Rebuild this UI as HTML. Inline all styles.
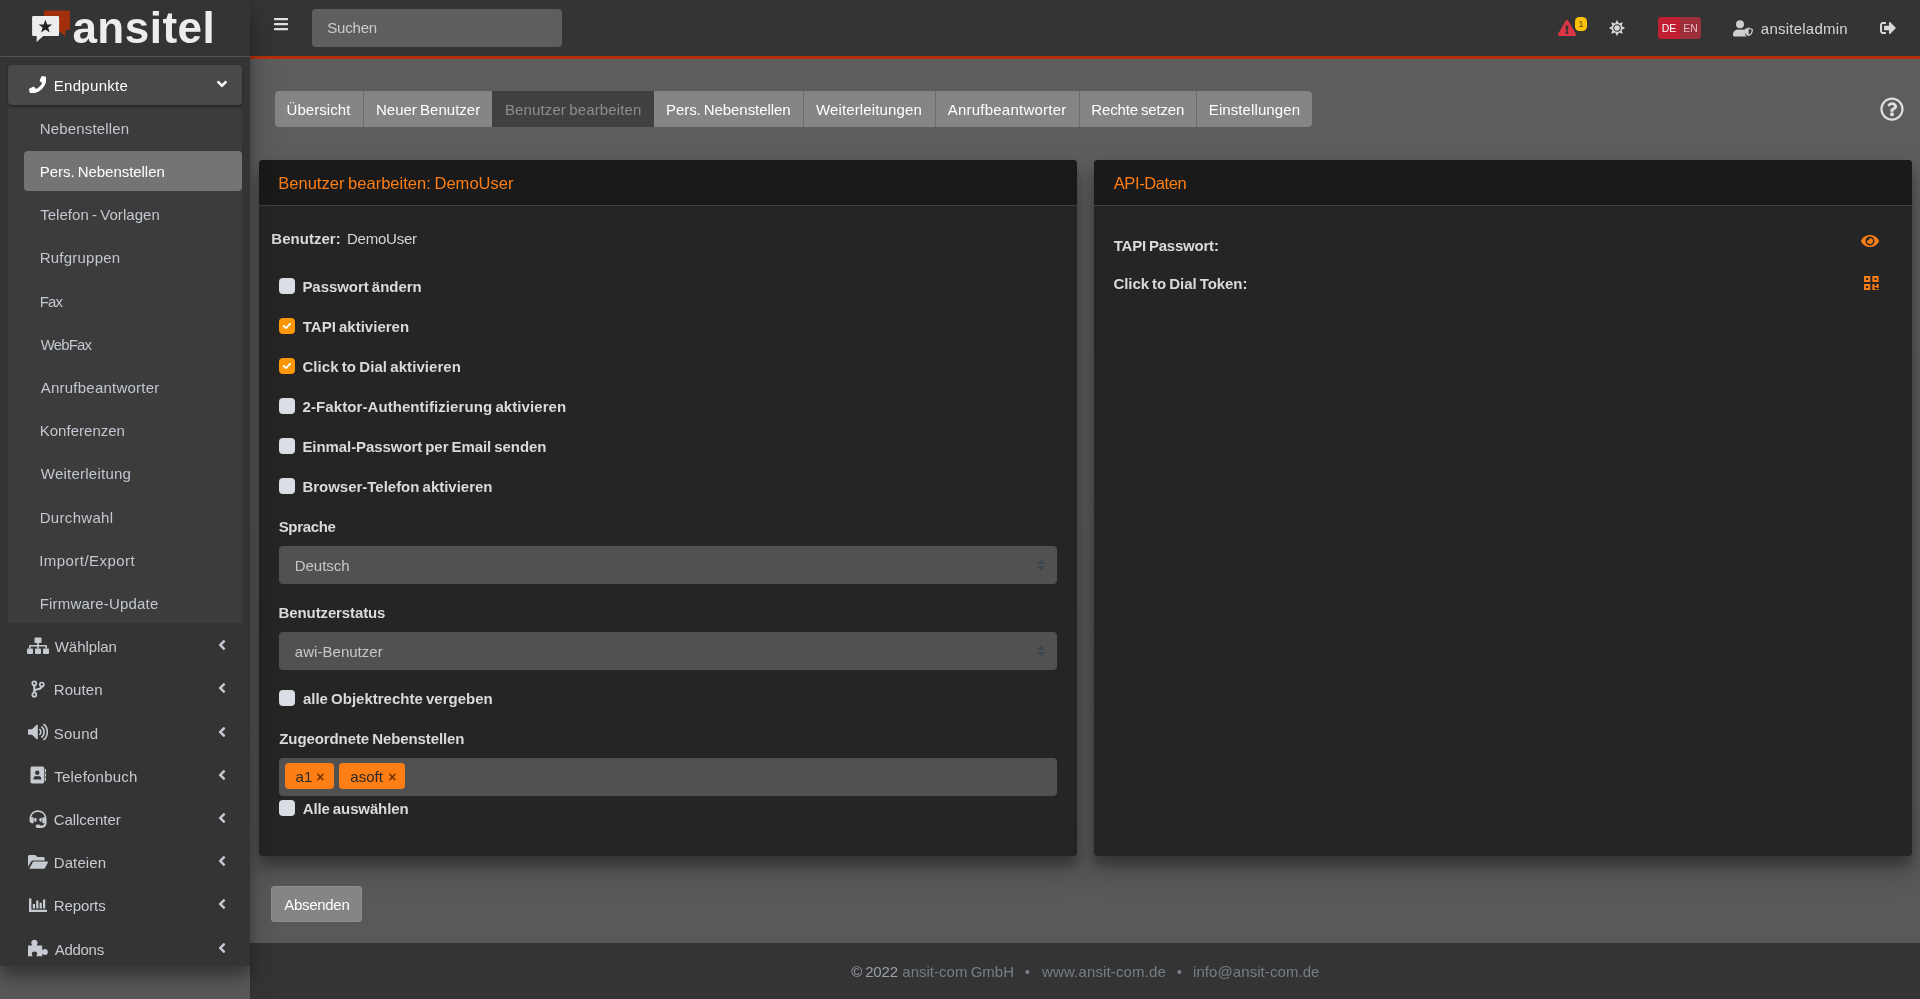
<!DOCTYPE html>
<html lang="de">
<head>
<meta charset="utf-8">
<title>ansitel - Benutzer bearbeiten</title>
<style>
*{box-sizing:border-box;margin:0;padding:0}
html,body{width:1920px;height:999px;overflow:hidden}
body{background:#5a5a5a;color:#ddd;font-family:"Liberation Sans",sans-serif;font-size:15px;position:relative}
svg{display:block}
.abs{position:absolute}
.tx{position:absolute;top:0;white-space:nowrap;word-spacing:-1px}

/* ---------- sidebar ---------- */
#sidebar{position:absolute;left:0;top:0;width:250px;height:966px;background:#343434;box-shadow:0 14px 28px rgba(0,0,0,.25),0 10px 10px rgba(0,0,0,.22);z-index:5}
#brand{position:absolute;left:0;top:0;width:250px;height:57px;border-bottom:1px solid #4b545c}
#brand .logo{top:-1px;font-weight:bold;font-size:44px;line-height:57px;color:#ededed}
.nav-top{position:absolute;left:8px;width:234px;height:40px;border-radius:4px;color:#c6cad1;line-height:41px}
.nav-top .ic{position:absolute;left:18.600px;top:10.500px;width:22px;height:18px;display:flex;justify-content:center;align-items:center}
.nav-top .ar{position:absolute;right:16px;top:11.400px}
.nav-top.open{background:#494949;color:#fff;box-shadow:0 1px 3px rgba(0,0,0,.12),0 1px 2px rgba(0,0,0,.24)}
#tree{position:absolute;left:8px;top:108px;width:234px;height:515px;background:#3c3c3c}
.sub{position:absolute;left:24px;width:218px;height:40px;border-radius:4px;color:#c2c7d0;line-height:41px}
.sub.act{background:#747474;color:#fff}

/* ---------- navbar ---------- */
#navbar{position:absolute;left:250px;top:0;width:1670px;height:59px;background:#343434;border-bottom:3px solid #b5300a;z-index:3}
#search{position:absolute;left:62px;top:9px;width:250px;height:38px;border-radius:4px;background:#5e5e5e;color:#ccc;line-height:38px}

/* ---------- content ---------- */
#content{position:absolute;left:250px;top:59px;width:1670px;height:884px;background:linear-gradient(#5d5d5d 0,#5d5d5d 12%,#595959 92%,#595959 100%)}
#tabs{position:absolute;left:25px;top:32px;width:1037px;height:36px;border-radius:4px;overflow:hidden}
.tab{position:absolute;top:0;height:36px;line-height:38px;background:#858585;color:#fff;border-left:1px solid #6e6e6e}
.tab:first-child{border-left:none}
.tab.dis{background:#404040;color:#8d8d8d;border-left:none}
.tab.dis + .tab{border-left:none}
.card{position:absolute;top:101px;width:818px;height:696px;background:#252525;border-radius:4px;box-shadow:0 0 1px rgba(0,0,0,.125),0 14px 28px rgba(0,0,0,.25),0 10px 10px rgba(0,0,0,.22)}
.card .hd{position:relative;height:46px;background:#1a1a1a;border-bottom:1px solid #3a4047;border-radius:4px 4px 0 0;color:#fd7e14;font-size:16.5px;line-height:46px}
.b{font-weight:bold;color:#dadada}
.row{position:absolute;left:20px;height:20px;line-height:22px;white-space:nowrap}
.cb{position:absolute;left:0;top:2px;width:16px;height:16px;border-radius:4px;background:#dadee4}
.cb.on{background:#fe9705}
.cb.on svg{position:absolute;left:3px;top:3px}
.sel{position:absolute;left:20px;width:778px;height:38px;border-radius:4px;background:#515151;color:#c8c8c8;line-height:40px}
.sel svg{position:absolute;right:12px;top:14px}
.tag{position:absolute;top:5px;height:26px;border-radius:4px;background:#fd7e14;color:#2a2a2a;line-height:26px}
.tag .tx{top:1px}
.tag .x{color:#7a3300;font-weight:bold;font-size:14px}
#submit{position:absolute;left:21px;top:827px;width:91px;height:36px;border-radius:3px;background:#858585;border:1px solid #8e8e8e;color:#fff;line-height:36px}

/* ---------- footer ---------- */
#footer{position:absolute;left:250px;top:943px;width:1670px;height:56px;background:#343434;color:#757e88;line-height:57px;z-index:2}
#footer .c{color:#9aa2ac}
#sidebar,#navbar,#content,#footer{will-change:transform}

/* per-text fitting */
#a0{margin-left:0.32px;letter-spacing:-0.291px}
#b0{margin-left:-0.34px;letter-spacing:0.058px}
#b1{margin-left:-0.78px;letter-spacing:0.019px}
#b2{margin-left:-0.11px;letter-spacing:0.120px}
#b3{margin-left:-0.41px;letter-spacing:-0.067px}
#b4{margin-left:-0.43px;letter-spacing:0.150px}
#b5{margin-left:0.11px;letter-spacing:0.230px}
#b6{margin-left:-0.95px;letter-spacing:-0.157px}
#b7{margin-left:-0.79px;letter-spacing:0.092px}
#c0{margin-left:0.09px;letter-spacing:-0.044px}
#c1{margin-left:0.47px;letter-spacing:0.004px}
#c2{margin-left:0.10px;letter-spacing:0.064px}
#c3{margin-left:0.31px;letter-spacing:0.079px}
#c4{margin-left:0.09px;letter-spacing:-0.071px}
#c5{margin-left:0.09px;letter-spacing:-0.014px}
#c6{margin-left:0.60px;letter-spacing:0.001px}
#c7{margin-left:0.53px;letter-spacing:-0.123px}
#f0{margin-left:0.43px;letter-spacing:0.026px}
#f1{margin-left:-0.42px;letter-spacing:-0.215px}
#g0{margin-left:0.00px;letter-spacing:0.000px}
#g1{margin-left:0.00px;letter-spacing:0.000px}
#g2{margin-left:0.00px;letter-spacing:0.000px}
#g3{margin-left:0.00px;letter-spacing:0.000px}
#h0{margin-left:-0.38px;letter-spacing:0.023px}
#h1{margin-left:0.44px;letter-spacing:-0.401px}
#l0{margin-left:0.08px;letter-spacing:-0.336px}
#l1{margin-left:-0.03px;letter-spacing:-0.117px}
#l2{margin-left:0.63px;letter-spacing:-0.091px}
#lg{margin-left:-1.00px;letter-spacing:0.500px}
#n0{margin-left:0.19px;letter-spacing:0.298px}
#n1{margin-left:1.17px;letter-spacing:-0.057px}
#n2{margin-left:0.13px;letter-spacing:0.096px}
#n3{margin-left:0.17px;letter-spacing:0.256px}
#n4{margin-left:0.64px;letter-spacing:0.226px}
#n5{margin-left:0.19px;letter-spacing:-0.068px}
#n6{margin-left:0.13px;letter-spacing:0.114px}
#n7{margin-left:0.13px;letter-spacing:-0.099px}
#n8{margin-left:1.09px;letter-spacing:-0.280px}
#o0{margin-left:0.47px;letter-spacing:-0.189px}
#o1{margin-left:0.99px;letter-spacing:0.018px}
#o2{margin-left:0.25px;letter-spacing:0.000px}
#o3{margin-left:1.43px;letter-spacing:0.143px}
#o4{margin-left:0.25px;letter-spacing:0.000px}
#o5{margin-left:0.46px;letter-spacing:0.069px}
#q0{margin-left:-0.00px;letter-spacing:-0.191px}
#r0{margin-left:0.47px;letter-spacing:-0.217px}
#r1{margin-left:0.10px;letter-spacing:-0.054px}
#s0{margin-left:0.14px;letter-spacing:0.170px}
#s1{margin-left:0.19px;letter-spacing:-0.042px}
#s10{margin-left:-0.38px;letter-spacing:0.450px}
#s11{margin-left:0.14px;letter-spacing:0.194px}
#s2{margin-left:0.62px;letter-spacing:0.036px}
#s3{margin-left:0.14px;letter-spacing:0.221px}
#s4{margin-left:0.14px;letter-spacing:-0.892px}
#s5{margin-left:1.18px;letter-spacing:-0.851px}
#s6{margin-left:1.07px;letter-spacing:0.242px}
#s7{margin-left:0.14px;letter-spacing:0.018px}
#s8{margin-left:1.18px;letter-spacing:0.242px}
#s9{margin-left:0.14px;letter-spacing:0.310px}
#u0{margin-left:0.26px;letter-spacing:0.232px}
#v0{margin-left:0.16px;letter-spacing:-0.041px}
#v1{margin-left:0.27px;letter-spacing:0.028px}
</style>
</head>
<body>

<div id="content">
  <div id="tabs"><div class="tab " style="left:0px;width:88px"><span id="b0" class="tx" style="left:11.9px;">Übersicht</span></div><div class="tab " style="left:88px;width:129px"><span id="b1" class="tx" style="left:12.7px;">Neuer Benutzer</span></div><div class="tab dis" style="left:217px;width:162px"><span id="b2" class="tx" style="left:13.1px;">Benutzer bearbeiten</span></div><div class="tab " style="left:379px;width:148.5px"><span id="b3" class="tx" style="left:12.4px;">Pers. Nebenstellen</span></div><div class="tab " style="left:527.5px;width:132.0px"><span id="b4" class="tx" style="left:12.8px;">Weiterleitungen</span></div><div class="tab " style="left:659.5px;width:144.0px"><span id="b5" class="tx" style="left:12.1px;">Anrufbeantworter</span></div><div class="tab " style="left:803.5px;width:117.5px"><span id="b6" class="tx" style="left:12.8px;">Rechte setzen</span></div><div class="tab " style="left:921px;width:116px"><span id="b7" class="tx" style="left:12.6px;">Einstellungen</span></div></div>
  <svg class="abs" style="left:1630.400px;top:38px" width="24" height="24" viewBox="0 0 512 512"><path fill="#e0e0e0" d="M256 8C119.043 8 8 119.083 8 256c0 136.997 111.043 248 248 248s248-111.003 248-248C504 119.083 392.957 8 256 8zm0 448c-110.532 0-200-89.431-200-200 0-110.495 89.472-200 200-200 110.491 0 200 89.471 200 200 0 110.530-89.431 200-200 200zm107.244-255.200c0 67.052-72.421 68.084-72.421 92.863V300c0 6.627-5.373 12-12 12h-45.647c-6.627 0-12-5.373-12-12v-8.659c0-35.745 27.100-50.034 47.579-61.516 17.561-9.845 28.324-16.541 28.324-29.579 0-17.246-21.999-28.693-39.784-28.693-23.189 0-33.894 10.977-48.942 29.969-4.057 5.120-11.460 6.071-16.666 2.124l-27.824-21.098c-5.107-3.872-6.251-11.066-2.644-16.363C184.846 131.491 214.940 112 261.794 112c49.071 0 101.450 38.304 101.450 88.800zM298 368c0 23.159-18.841 42-42 42s-42-18.841-42-42 18.841-42 42-42 42 18.841 42 42z"/></svg>
  <div class="card" style="left:9px">
    <div class="hd"><span id="h0" class="tx" style="left:19.6px;">Benutzer bearbeiten: DemoUser</span></div>
    <div class="row" style="top:68px"><span id="f0" class="tx b" style="left:-8.1px;">Benutzer:</span><span id="f1" class="tx" style="left:68.3px;color:#d6d6d6">DemoUser</span></div>
    <div class="row" style="top:116px"><i class="cb"></i><span id="c0" class="tx b" style="left:23.3px;">Passwort ändern</span></div>
    <div class="row" style="top:156px"><i class="cb on"><svg width="10" height="10" viewBox="0 0 10 10"><path d="M1.700 5 L4 7.100 L8.100 2.800" fill="none" stroke="#fff" stroke-width="1.900" stroke-linecap="round" stroke-linejoin="round"/></svg></i><span id="c1" class="tx b" style="left:23.3px;">TAPI aktivieren</span></div>
    <div class="row" style="top:196px"><i class="cb on"><svg width="10" height="10" viewBox="0 0 10 10"><path d="M1.700 5 L4 7.100 L8.100 2.800" fill="none" stroke="#fff" stroke-width="1.900" stroke-linecap="round" stroke-linejoin="round"/></svg></i><span id="c2" class="tx b" style="left:23.3px;">Click to Dial aktivieren</span></div>
    <div class="row" style="top:236px"><i class="cb"></i><span id="c3" class="tx b" style="left:23.3px;">2-Faktor-Authentifizierung aktivieren</span></div>
    <div class="row" style="top:276px"><i class="cb"></i><span id="c4" class="tx b" style="left:23.3px;">Einmal-Passwort per Email senden</span></div>
    <div class="row" style="top:316px"><i class="cb"></i><span id="c5" class="tx b" style="left:23.3px;">Browser-Telefon aktivieren</span></div>
    <div class="row" style="top:356px"><span id="l0" class="tx b" style="left:-0.4px;">Sprache</span></div>
    <div class="sel" style="top:386px"><span id="v0" class="tx" style="left:15.6px;">Deutsch</span><svg width="8" height="10" viewBox="0 0 8 10"><path d="M0 4 L4 0 L8 4Z M0 6 L4 10 L8 6Z" fill="#39424d"/></svg></div>
    <div class="row" style="top:442px"><span id="l1" class="tx b" style="left:-0.4px;">Benutzerstatus</span></div>
    <div class="sel" style="top:472px"><span id="v1" class="tx" style="left:15.6px;">awi-Benutzer</span><svg width="8" height="10" viewBox="0 0 8 10"><path d="M0 4 L4 0 L8 4Z M0 6 L4 10 L8 6Z" fill="#39424d"/></svg></div>
    <div class="row" style="top:528px"><i class="cb"></i><span id="c6" class="tx b" style="left:23.3px;">alle Objektrechte vergeben</span></div>
    <div class="row" style="top:568px"><span id="l2" class="tx b" style="left:-0.4px;">Zugeordnete Nebenstellen</span></div>
    <div class="sel" style="top:598px"><span class="tag" style="left:6px;width:49px"><span id="g0" class="tx" style="left:10.6px;">a1</span><span id="g1" class="tx x" style="left:31.3px;">×</span></span><span class="tag" style="left:60px;width:66px"><span id="g2" class="tx" style="left:11.3px;">asoft</span><span id="g3" class="tx x" style="left:49.3px;">×</span></span></div>
    <div class="row" style="top:638px"><i class="cb"></i><span id="c7" class="tx b" style="left:23.3px;">Alle auswählen</span></div>
  </div>
  <div class="card" style="left:844px">
    <div class="hd"><span id="h1" class="tx" style="left:19.3px;">API-Daten</span></div>
    <div class="row" style="top:75px"><span id="r0" class="tx b" style="left:-0.7px;">TAPI Passwort:</span></div>
    <div class="row" style="top:113px"><span id="r1" class="tx b" style="left:-0.7px;">Click to Dial Token:</span></div>
    <svg class="abs" style="left:766.600px;top:73px" width="18" height="16" viewBox="0 0 576 512"><path fill="#fd7e14" d="M572.520 241.400C518.290 135.590 410.930 64 288 64S57.680 135.640 3.480 241.410a32.350 32.350 0 0 0 0 29.190C57.710 376.410 165.070 448 288 448s230.320-71.640 284.520-177.410a32.350 32.350 0 0 0 0-29.190zM288 400a144 144 0 1 1 144-144 143.930 143.930 0 0 1-144 144zm0-240a95.310 95.310 0 0 0-25.310 3.790 47.850 47.850 0 0 1-66.900 66.900A95.780 95.780 0 1 0 288 160z"/></svg>
    <svg class="abs" style="left:770.300px;top:116px" width="14.600" height="14.100" preserveAspectRatio="none" viewBox="0 0 15 15"><path fill="#fd7e14" fill-rule="evenodd" d="M0 0h6.400v6.400H0zM2.100 2.100v2.200h2.200V2.100zM8.600 0H15v6.400H8.600zM10.700 2.100v2.200h2.200V2.100zM0 8.600h6.400V15H0zM2.100 10.700v2.200h2.200v-2.200zM8.600 8.600h2.100v2.100h2.200V8.600H15v4.300h-2.100v-1.100h-2.200V15H8.600zM12.900 13.900H15V15h-2.100zM10.700 13.900h1.100V15h-1.100z"/></svg>
  </div>
  <div id="submit"><span id="a0" class="tx" style="left:11.9px;">Absenden</span></div>
</div>

<div id="navbar">
  <svg class="abs" style="left:24px;top:16px" width="14" height="16" viewBox="0 0 448 512"><path fill="#e0e0e0" d="M16 132h416c8.837 0 16-7.163 16-16V76c0-8.837-7.163-16-16-16H16C7.163 60 0 67.163 0 76v40c0 8.837 7.163 16 16 16zm0 160h416c8.837 0 16-7.163 16-16v-40c0-8.837-7.163-16-16-16H16c-8.837 0-16 7.163-16 16v40c0 8.837 7.163 16 16 16zm0 160h416c8.837 0 16-7.163 16-16v-40c0-8.837-7.163-16-16-16H16c-8.837 0-16 7.163-16 16v40c0 8.837 7.163 16 16 16z"/></svg>
  <svg class="abs" style="left:1308.200px;top:20px" width="18" height="16" viewBox="0 0 576 512"><path fill="#dc3545" d="M569.517 440.013C587.975 472.007 564.806 512 527.940 512H48.054c-36.937 0-59.999-40.055-41.577-71.987L246.423 23.985c18.467-32.009 64.720-31.951 83.154 0l239.940 416.028zM288 354c-25.405 0-46 20.595-46 46s20.595 46 46 46 46-20.595 46-46-20.595-46-46-46zm-43.673-165.346l7.418 136c.347 6.364 5.609 11.346 11.982 11.346h48.546c6.373 0 11.635-4.982 11.982-11.346l7.418-136c.375-6.874-5.098-12.654-11.982-12.654h-63.383c-6.884 0-12.356 5.780-11.981 12.654z"/></svg>
  <span class="abs" style="left:1325px;top:17px;width:12px;height:14px;border-radius:4.500px;background:#ffc107;color:#4a4a3a;font-size:9px;line-height:15px;text-align:center;letter-spacing:0">1</span>
  <svg class="abs" style="left:1359.200px;top:19.900px;overflow:visible" width="16" height="16" viewBox="0 0 16 16"><path fill="#d9d9d9" d="M8.00 -0.10 L9.91 3.38 L13.73 2.27 L12.62 6.09 L16.10 8.00 L12.62 9.91 L13.73 13.73 L9.91 12.62 L8.00 16.10 L6.09 12.62 L2.27 13.73 L3.38 9.91 L-0.10 8.00 L3.38 6.09 L2.27 2.27 L6.09 3.38Z"/><circle cx="8" cy="8" r="3.300" fill="none" stroke="#333" stroke-width="1.100"/></svg>
  <span class="abs" style="left:1408px;top:17px;width:22px;height:22px;border-radius:3px 0 0 3px;background:#c01f30;color:#fff;font-size:10.500px;line-height:22px;text-align:center;letter-spacing:0">DE</span>
  <span class="abs" style="left:1430px;top:17px;width:21px;height:22px;border-radius:0 3px 3px 0;background:#9b2f3c;color:#eab9bf;font-size:10.500px;line-height:22px;text-align:center;letter-spacing:0">EN</span>
  <svg class="abs" style="left:1483px;top:20px" width="21" height="17" viewBox="0 0 21 17"><g fill="#cfcfcf"><circle cx="7" cy="4.200" r="4"/><path d="M0 14.800c0-3 2.200-5.300 5-5.300h.7c.8.400 1.800.4 2.600 0H9c1.200 0 2.300.4 3.100 1.100v2.400c0 1.400.6 2.700 1.500 3.600H1.500C.7 16.600 0 15.900 0 15.100z"/><path transform="translate(-1 -0.800)" fill-rule="evenodd" d="M16.700 8.300l3.800 1.500c.3.100.5.400.5.800 0 3.300-1.900 5.500-4 6.300-.2.100-.400.100-.600 0-2.600-1.100-4-3.600-4-6.300 0-.4.200-.7.500-.8l3.800-1.500zm0 1.300v6c1.600-.8 2.900-2.300 3-4.700z"/></g></svg>
  <span id="u0" class="tx" style="left:1510.6px;top:9px;line-height:40px;color:#d6d6d6">ansiteladmin</span>
  <svg class="abs" style="left:1630px;top:20px" width="16" height="16" viewBox="0 0 512 512"><path fill="#d8d8d8" d="M497 273L329 441c-15 15-41 4.500-41-17v-96H152c-13.300 0-24-10.700-24-24v-96c0-13.300 10.700-24 24-24h136V88c0-21.400 25.900-32 41-17l168 168c9.300 9.400 9.300 24.600 0 34zM192 436v-40c0-6.600-5.400-12-12-12H96c-17.700 0-32-14.300-32-32V160c0-17.700 14.300-32 32-32h84c6.600 0 12-5.400 12-12V76c0-6.600-5.400-12-12-12H96c-53 0-96 43-96 96v192c0 53 43 96 96 96h84c6.600 0 12-5.400 12-12z"/></svg>
  <div id="search"><span id="q0" class="tx" style="left:15.3px;">Suchen</span></div>
</div>

<div id="footer"><span id="o0" class="tx c" style="left:600.9px;">© 2022</span><span id="o1" class="tx" style="left:651.3px;">ansit-com GmbH</span><span id="o2" class="tx" style="left:774.6px;">•</span><span id="o3" class="tx" style="left:790.6px;">www.ansit-com.de</span><span id="o4" class="tx" style="left:926.6px;">•</span><span id="o5" class="tx" style="left:942.6px;">info@ansit-com.de</span></div>

<div id="sidebar">
  <div id="brand">
    <svg class="abs" style="left:30px;top:8px" width="44" height="38" viewBox="0 0 44 38">
      <path d="M14 2.600h24.600a1.300 1.300 0 0 1 1.300 1.300v17a1 1 0 0 1-1 1h-3.400l-.2 6-7.200-6H14z" fill="#a3300d"/>
      <path d="M3.400 8h24.400a1.300 1.300 0 0 1 1.300 1.300v17.400a1.300 1.300 0 0 1-1.300 1.300H13.200l-6.500 6v-6H3.400a1.300 1.300 0 0 1-1.300-1.300V9.300A1.300 1.300 0 0 1 3.400 8z" fill="#ededed"/>
      <path d="M15 12.200l1.550 4.200h4.450l-3.550 2.700 1.300 4.300L15 20.800l-3.750 2.600 1.300-4.300L9 16.400h4.450z" fill="#222" transform="translate(15.400 18.300) scale(1.130) translate(-15 -18)"/>
    </svg>
    <span id="lg" class="tx logo" style="left:73.4px;">ansitel</span>
  </div>
  <div id="tree"></div>
  <div class="nav-top open" style="top:65px"><span class="ic"><svg width="17.600" height="17.600" viewBox="0 0 512 512"><path fill="currentColor" d="M493.400 24.600l-104-24c-11.300-2.600-22.900 3.300-27.500 13.900l-48 112c-4.200 9.800-1.400 21.300 6.900 28l60.600 49.600c-36 76.700-98.900 140.500-177.200 177.200l-49.600-60.600c-6.800-8.300-18.200-11.100-28-6.900l-112 48C3.900 366.500-2 378.100.6 389.400l24 104C27.100 504.200 36.700 512 48 512c256.100 0 464-207.500 464-464 0-11.200-7.700-20.900-18.600-23.400z"/></svg></span><span id="n0" class="tx" style="left:45.6px;">Endpunkte</span><svg class="ar" style="right:14px;top:11.400px" width="12" height="16" viewBox="0 0 320 512"><path fill="currentColor" d="M143 352.300L7 216.300c-9.400-9.400-9.400-24.600 0-33.900l22.600-22.600c9.400-9.400 24.600-9.400 33.900 0l96.400 96.400 96.400-96.400c9.400-9.400 24.600-9.400 33.900 0l22.600 22.600c9.400 9.400 9.400 24.600 0 33.900l-136 136c-9.200 9.400-24.400 9.400-33.800 0z"/></svg></div>
  <div class="nav-top " style="top:626px"><span class="ic"><svg width="22" height="18" viewBox="0 0 22 18"><g fill="currentColor"><rect x="7.500" y="0.500" width="7" height="5.500" rx="0.900"/><rect x="0" y="11.500" width="6" height="5.500" rx="0.900"/><rect x="8" y="11.500" width="6" height="5.500" rx="0.900"/><rect x="16" y="11.500" width="6" height="5.500" rx="0.900"/><path d="M10.200 6h1.600v2h7.400c.5 0 .8.300.8.800v2.700h-1.600V9.600h-6.600v1.900h-1.600V9.600H3.600v1.900H2V8.800c0-.5.300-.8.800-.8h7.400z"/></g></svg></span><span id="n1" class="tx" style="left:45.6px;">Wählplan</span><svg class="ar" width="8" height="16" viewBox="0 0 256 512"><path fill="currentColor" d="M31.7 239l136-136c9.4-9.4 24.6-9.4 33.9 0l22.600 22.600c9.400 9.400 9.400 24.600 0 33.900L127.900 256l96.400 96.400c9.400 9.400 9.400 24.600 0 33.900L201.700 409c-9.400 9.400-24.600 9.400-33.900 0l-136-136c-9.500-9.400-9.500-24.600-.1-34z"/></svg></div>
  <div class="nav-top " style="top:669px"><span class="ic"><svg width="14" height="18" viewBox="0 0 14 18"><g fill="none" stroke="currentColor" stroke-width="1.700"><circle cx="3.300" cy="3.300" r="2"/><circle cx="3.300" cy="14.700" r="2"/><circle cx="10.800" cy="4.500" r="2"/><path d="M3.300 5.300v7.400" stroke-width="2.200"/><path d="M3.300 11.500c0-2.800 7.500-1.500 7.500-5" stroke-width="2"/></g></svg></span><span id="n2" class="tx" style="left:45.6px;">Routen</span><svg class="ar" width="8" height="16" viewBox="0 0 256 512"><path fill="currentColor" d="M31.7 239l136-136c9.4-9.4 24.6-9.4 33.9 0l22.600 22.600c9.400 9.400 9.400 24.600 0 33.900L127.900 256l96.400 96.400c9.400 9.400 9.400 24.600 0 33.900L201.700 409c-9.400 9.400-24.600 9.400-33.900 0l-136-136c-9.500-9.400-9.500-24.600-.1-34z"/></svg></div>
  <div class="nav-top " style="top:712.5px"><span class="ic"><svg width="20" height="18" viewBox="0 0 20 18"><path fill="currentColor" d="M0 6.300h3.300L7.600 2c.5-.5 1.400-.1 1.400.6v12.800c0 .7-.9 1.100-1.400.6l-4.300-4.300H0c-.4 0-.8-.3-.8-.8V7.100c0-.5.400-.8.800-.8z" transform="translate(0.800 0)"/><g fill="none" stroke="currentColor" stroke-width="1.600" stroke-linecap="round"><path d="M11.800 6.600c1.400 1 1.400 3.800 0 4.800"/><path d="M13.800 4c3 2 3 8 0 10"/><path d="M15.900 1.500c4.500 3 4.500 12 0 15"/></g></svg></span><span id="n3" class="tx" style="left:45.6px;">Sound</span><svg class="ar" width="8" height="16" viewBox="0 0 256 512"><path fill="currentColor" d="M31.7 239l136-136c9.4-9.4 24.6-9.4 33.9 0l22.600 22.600c9.400 9.400 9.400 24.600 0 33.900L127.900 256l96.400 96.400c9.400 9.400 9.400 24.600 0 33.900L201.700 409c-9.400 9.400-24.600 9.400-33.900 0l-136-136c-9.500-9.400-9.500-24.600-.1-34z"/></svg></div>
  <div class="nav-top " style="top:755.5px"><span class="ic"><svg width="16" height="18" viewBox="0 0 16 18"><path fill="currentColor" fill-rule="evenodd" d="M2.200 0.500h10.300c1 0 1.700.8 1.700 1.700v13.600c0 1-.8 1.700-1.700 1.700H2.200c-1 0-1.700-.8-1.700-1.700V2.200c0-1 .8-1.700 1.700-1.700zM7.300 4.600a2.200 2.200 0 1 0 0 4.400 2.200 2.200 0 0 0 0-4.400zM3.500 12.700v.7h7.700v-.7c0-1.500-1.200-2.600-2.600-2.600h-.3c-.6.300-1.400.300-2 0H6c-1.400 0-2.500 1.100-2.500 2.600z"/><path fill="currentColor" d="M14.800 3h.8c.2 0 .4.200.4.400v2.600c0 .2-.2.400-.4.400h-.8zM14.800 7.300h.8c.2 0 .4.200.4.400v2.600c0 .2-.2.400-.4.400h-.8zM14.800 11.600h.8c.2 0 .4.200.4.400v2.600c0 .2-.2.400-.4.400h-.8z"/></svg></span><span id="n4" class="tx" style="left:45.6px;">Telefonbuch</span><svg class="ar" width="8" height="16" viewBox="0 0 256 512"><path fill="currentColor" d="M31.7 239l136-136c9.4-9.4 24.6-9.4 33.9 0l22.600 22.600c9.400 9.400 9.400 24.600 0 33.900L127.900 256l96.400 96.400c9.400 9.400 9.400 24.600 0 33.900L201.700 409c-9.400 9.400-24.600 9.400-33.900 0l-136-136c-9.500-9.400-9.500-24.600-.1-34z"/></svg></div>
  <div class="nav-top " style="top:799px"><span class="ic"><svg width="18" height="18" viewBox="0 0 18 18"><path fill="currentColor" d="M9 0.300C4.200 0.300 0.600 4 0.500 8.800v1.800c0 1.500 1.200 2.700 2.700 2.700h.6c.5 0 .9-.4.900-.9V8.200c0-.5-.4-.9-.9-.9h-.6c-.3 0-.6 0-.9.200C2.700 4.100 5.500 2 9 2s6.300 2.100 6.700 5.500c-.3-.1-.6-.2-.9-.2h-.6c-.5 0-.9.400-.9.900v4.200c0 .5.400.9.900.9h.6c.3 0 .6 0 .9-.2-.2 1.400-1.400 2.500-2.900 2.500h-1.600c-.3-.6-.9-1-1.600-1H8.500c-1 0-1.800.8-1.800 1.700 0 1 .8 1.700 1.800 1.700h4.300c2.600 0 4.700-2.100 4.700-4.700V8.800C17.400 4 13.800.3 9 .3z"/><ellipse cx="6.400" cy="9.800" rx="1.300" ry="2.100" fill="currentColor"/><ellipse cx="11.600" cy="9.800" rx="1.300" ry="2.100" fill="currentColor"/></svg></span><span id="n5" class="tx" style="left:45.6px;">Callcenter</span><svg class="ar" width="8" height="16" viewBox="0 0 256 512"><path fill="currentColor" d="M31.7 239l136-136c9.4-9.4 24.6-9.4 33.9 0l22.600 22.600c9.400 9.400 9.400 24.600 0 33.900L127.900 256l96.400 96.400c9.400 9.400 9.400 24.600 0 33.900L201.700 409c-9.400 9.400-24.600 9.400-33.900 0l-136-136c-9.500-9.400-9.500-24.600-.1-34z"/></svg></div>
  <div class="nav-top " style="top:842px"><span class="ic"><svg width="20" height="16" viewBox="0 0 20 16"><path fill="currentColor" d="M19.800 8.700l-2.500 4.800c-.4.800-1.200 1.300-2.100 1.300H1.300l3.100-5.900c.4-.8 1.200-1.300 2.100-1.300h12.600c.7 0 1.100.6.700 1.100zM6.500 6.400h10.200V4.600c0-.9-.8-1.600-1.700-1.600H9.400L7.200.9H1.700C.8.900 0 1.600 0 2.500v10.300l2.900-5.100c.7-.8 2-1.300 3.600-1.300z"/></svg></span><span id="n6" class="tx" style="left:45.6px;">Dateien</span><svg class="ar" width="8" height="16" viewBox="0 0 256 512"><path fill="currentColor" d="M31.7 239l136-136c9.4-9.4 24.6-9.4 33.9 0l22.600 22.600c9.400 9.400 9.400 24.600 0 33.900L127.900 256l96.400 96.400c9.400 9.400 9.400 24.600 0 33.900L201.700 409c-9.400 9.400-24.600 9.400-33.900 0l-136-136c-9.500-9.400-9.500-24.600-.1-34z"/></svg></div>
  <div class="nav-top " style="top:885px"><span class="ic"><svg width="18" height="16" viewBox="0 0 18 16"><path fill="currentColor" d="M0 1.500h2.400V12.700H18v2.300H0zM3.800 7h2.200v4.500H3.800zM7.200 3.500h2.200v8H7.200zM10.600 5.800h2.200v5.700h-2.200zM14 2.400h2.200v9.100H14z"/></svg></span><span id="n7" class="tx" style="left:45.6px;">Reports</span><svg class="ar" width="8" height="16" viewBox="0 0 256 512"><path fill="currentColor" d="M31.7 239l136-136c9.4-9.4 24.6-9.4 33.9 0l22.600 22.600c9.400 9.400 9.400 24.600 0 33.900L127.900 256l96.400 96.400c9.400 9.400 9.400 24.600 0 33.900L201.700 409c-9.400 9.400-24.600 9.400-33.900 0l-136-136c-9.500-9.400-9.500-24.600-.1-34z"/></svg></div>
  <div class="nav-top " style="top:928.5px"><span class="ic"><svg width="20" height="18" viewBox="0 0 20 18"><path fill="currentColor" d="M0 7.200h4c0-.9-.8-1.500-.8-2.800C3.200 2.700 4.700 1.500 6.400 1.500s3.200 1.200 3.200 2.900c0 1.300-.8 1.900-.8 2.800h5.400v4.400c.9 0 1.500-.9 2.800-.9 1.700 0 2.900 1.300 2.900 3s-1.200 3-2.900 3c-1.300 0-1.900-.9-2.800-.9V18H8.400c0-.9.800-1.400.8-2.500 0-1.300-1.200-2.200-2.700-2.200S3.800 14.200 3.800 15.500c0 1.100.8 1.600.8 2.500H0z" transform="translate(0 -0.800)"/></svg></span><span id="n8" class="tx" style="left:45.6px;">Addons</span><svg class="ar" width="8" height="16" viewBox="0 0 256 512"><path fill="currentColor" d="M31.7 239l136-136c9.4-9.4 24.6-9.4 33.9 0l22.600 22.600c9.400 9.400 9.400 24.600 0 33.900L127.900 256l96.400 96.400c9.400 9.400 9.400 24.600 0 33.900L201.700 409c-9.400 9.400-24.600 9.400-33.900 0l-136-136c-9.500-9.400-9.500-24.600-.1-34z"/></svg></div>
  <div class="sub" style="top:108px"><span id="s0" class="tx" style="left:15.6px;">Nebenstellen</span></div>
  <div class="sub act" style="top:151px"><span id="s1" class="tx" style="left:15.6px;">Pers. Nebenstellen</span></div>
  <div class="sub" style="top:194px"><span id="s2" class="tx" style="left:15.6px;">Telefon - Vorlagen</span></div>
  <div class="sub" style="top:237px"><span id="s3" class="tx" style="left:15.6px;">Rufgruppen</span></div>
  <div class="sub" style="top:281px"><span id="s4" class="tx" style="left:15.6px;">Fax</span></div>
  <div class="sub" style="top:324px"><span id="s5" class="tx" style="left:15.6px;">WebFax</span></div>
  <div class="sub" style="top:367px"><span id="s6" class="tx" style="left:15.6px;">Anrufbeantworter</span></div>
  <div class="sub" style="top:410px"><span id="s7" class="tx" style="left:15.6px;">Konferenzen</span></div>
  <div class="sub" style="top:453px"><span id="s8" class="tx" style="left:15.6px;">Weiterleitung</span></div>
  <div class="sub" style="top:497px"><span id="s9" class="tx" style="left:15.6px;">Durchwahl</span></div>
  <div class="sub" style="top:540px"><span id="s10" class="tx" style="left:15.6px;">Import/Export</span></div>
  <div class="sub" style="top:583px"><span id="s11" class="tx" style="left:15.6px;">Firmware-Update</span></div>
</div>

</body>
</html>
